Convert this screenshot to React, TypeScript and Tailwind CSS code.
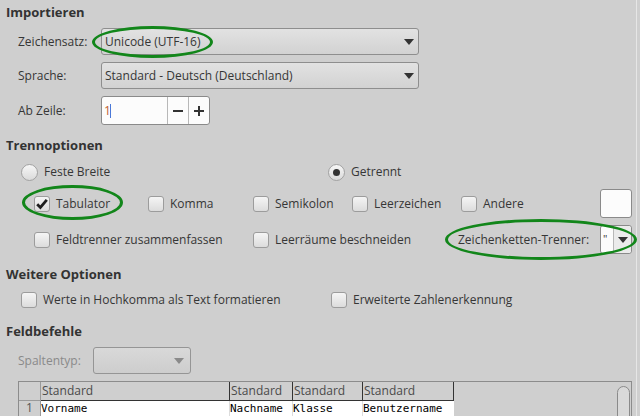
import React from "react";

const Arrow = ({ color = "#333" }: { color?: string }) => (
  <svg width="10" height="6" viewBox="0 0 10 6">
    <polygon points="0,0 10,0 5,6" fill={color} />
  </svg>
);

const Check = ({ checked = false }: { checked?: boolean }) => (
  <div className="w-[16px] h-[16px] shrink-0 rounded-[3px] border border-[#9c9c9c] bg-gradient-to-b from-[#f5f5f5] to-[#dcdcdc] flex items-center justify-center">
    {checked && (
      <svg width="14" height="14" viewBox="0 0 14 14">
        <path d="M2.2 7.2 L5.4 10.4 L11.8 2.8" stroke="#1e1e1e" strokeWidth="2.8" fill="none" />
      </svg>
    )}
  </div>
);

const Radio = ({ on = false }: { on?: boolean }) => (
  <div className="w-[17px] h-[17px] shrink-0 rounded-full border border-[#a2a2a2] bg-gradient-to-b from-[#f7f7f7] to-[#dadada] flex items-center justify-center">
    {on && <div className="w-[7px] h-[7px] rounded-full bg-[#333]" />}
  </div>
);

const Drop = ({ text, w }: { text: string; w: string }) => (
  <div className={`${w} h-full rounded-[3px] border border-[#8e8e8e] bg-gradient-to-b from-[#e2e2e2] to-[#d2d2d2] flex items-center pl-[3px] pr-[4px]`}>
    <span className="flex-1">{text}</span>
    <Arrow />
  </div>
);

const CheckItem = ({ label, w, checked }: { label: string; w: string; checked?: boolean }) => (
  <div className={`${w} flex items-center gap-[6px] shrink-0`}>
    <Check checked={checked} />
    <span className="whitespace-nowrap">{label}</span>
  </div>
);

export default function App() {
  return (
    <div
      className="relative w-[640px] h-[416px] overflow-hidden bg-[#cfcfcf] text-[12px] text-[#363636]"
      style={{ fontFamily: '"Open Sans", "Noto Sans", sans-serif' }}
    >
      <div className="w-[637px] h-full border-r border-[#e6e6e6] flex flex-col [&>*]:shrink-0">
        <div className="h-[26px] flex items-center pl-[6px] font-bold text-[13px] text-[#333]">Importieren</div>

        <div className="mt-[2px] h-[27px] flex items-center">
          <div className="w-[101px] pl-[18px]">Zeichensatz:</div>
          <Drop text="Unicode (UTF-16)" w="w-[318px]" />
        </div>

        <div className="mt-[7px] h-[27px] flex items-center">
          <div className="w-[101px] pl-[18px]">Sprache:</div>
          <Drop text="Standard - Deutsch (Deutschland)" w="w-[318px]" />
        </div>

        <div className="mt-[7px] h-[29px] flex items-center">
          <div className="w-[101px] pl-[18px]">Ab Zeile:</div>
          <div className="w-[109px] h-full rounded-[3px] border border-[#8a8a8a] bg-[#fcfcfc] flex">
            <div className="w-[66px] flex items-center pl-[2px] border-r border-[#b8b8b8]">
              <span className="text-[#c0602e]">1</span>
              <span className="w-px h-[14px] -ml-[1px] bg-[#4a78d8]" />
            </div>
            <div className="w-[21px] flex items-center justify-center border-r border-[#b8b8b8]">
              <div className="w-[10px] h-[2px] bg-[#333]" />
            </div>
            <div className="flex-1 flex items-center justify-center relative">
              <div className="w-[10px] h-[2px] bg-[#333]" />
              <div className="absolute w-[2px] h-[10px] bg-[#333]" />
            </div>
          </div>
        </div>

        <div className="mt-[11px] h-[20px] flex items-center pl-[6px] font-bold text-[13px] text-[#333]">Trennoptionen</div>

        <div className="mt-[6px] h-[20px] flex items-center">
          <div className="w-[328px] pl-[21px] flex items-center gap-[6px] shrink-0">
            <Radio />
            <span>Feste Breite</span>
          </div>
          <div className="flex items-center gap-[6px]">
            <Radio on />
            <span>Getrennt</span>
          </div>
        </div>

        <div className="mt-[7px] h-[29px] flex items-center pl-[34px]">
          <CheckItem label="Tabulator" w="w-[114px]" checked />
          <CheckItem label="Komma" w="w-[105px]" />
          <CheckItem label="Semikolon" w="w-[99px]" />
          <CheckItem label="Leerzeichen" w="w-[109px]" />
          <CheckItem label="Andere" w="w-[139px]" />
          <div className="w-[32px] h-full rounded-[3px] border border-[#8a8a8a] bg-[#fcfcfc]" />
        </div>

        <div className="mt-[7px] h-[29px] flex items-center pl-[34px]">
          <CheckItem label="Feldtrenner zusammenfassen" w="w-[219px]" />
          <CheckItem label="Leerräume beschneiden" w="w-[205px]" />
          <div className="w-[142px] shrink-0 whitespace-nowrap">Zeichenketten-Trenner:</div>
          <div className="w-[32px] h-full rounded-[3px] border border-[#8a8a8a] bg-[#fcfcfc] flex">
            <div className="w-[13px] border-r border-[#b8b8b8] flex items-center pl-[2px] text-[11px]">"</div>
            <div className="flex-1 flex items-center justify-center bg-[#ebebeb] rounded-r-[3px]">
              <Arrow />
            </div>
          </div>
        </div>

        <div className="mt-[11px] h-[20px] flex items-center pl-[6px] font-bold text-[13px] text-[#333]">Weitere Optionen</div>

        <div className="mt-[5px] h-[20px] flex items-center pl-[21px]">
          <CheckItem label="Werte in Hochkomma als Text formatieren" w="w-[310px]" />
          <CheckItem label="Erweiterte Zahlenerkennung" w="w-[250px]" />
        </div>

        <div className="mt-[12px] h-[20px] flex items-center pl-[6px] font-bold text-[13px] text-[#333]">Feldbefehle</div>

        <div className="mt-[5px] h-[27px] flex items-center">
          <div className="w-[93px] pl-[18px] text-[#8a8a8a]">Spaltentyp:</div>
          <div className="w-[98px] h-full rounded-[3px] border border-[#959595] bg-gradient-to-b from-[#d9d9d9] to-[#cdcdcd] flex items-center justify-end pr-[6px]">
            <Arrow color="#8a8a8a" />
          </div>
        </div>

        <div className="mt-[7px] ml-[18px] w-[614px] h-[60px] border border-[#8c8c8c] flex">
          <div className="flex flex-col">
            <div className="h-[19px] flex">
              <div className="w-[22px] border-r border-b border-[#9a9a9a]" />
              <div className="w-[189px] border-r border-b border-[#333] pl-[1px] leading-[18px] text-[#4a4a4a]">Standard</div>
              <div className="w-[63px] border-r border-b border-[#333] pl-[1px] leading-[18px] text-[#4a4a4a]">Standard</div>
              <div className="w-[70px] border-r border-b border-[#333] pl-[1px] leading-[18px] text-[#4a4a4a]">Standard</div>
              <div className="w-[91px] border-r border-b border-[#333] pl-[1px] leading-[18px] text-[#4a4a4a]">Standard</div>
            </div>
            <div
              className="h-[16px] flex text-[11px] text-black"
              style={{ fontFamily: '"DejaVu Sans Mono", monospace' }}
            >
              <div className="w-[22px] border-r border-b border-[#9a9a9a] flex justify-center text-[#555] text-[12px] leading-[14px]" style={{ fontFamily: '"Open Sans", sans-serif' }}>1</div>
              <div className="w-[189px] bg-white border-r border-[#dcdcdc] leading-[15px]">Vorname</div>
              <div className="w-[63px] bg-white border-r border-[#dcdcdc] leading-[15px]">Nachname</div>
              <div className="w-[70px] bg-white border-r border-[#dcdcdc] leading-[15px]">Klasse</div>
              <div className="w-[91px] bg-white leading-[15px]">Benutzername</div>
            </div>
          </div>
          <div className="ml-auto mr-[1px] mt-[4px] w-[13px] h-[50px] rounded-t-[7px] border border-[#8a8a8a] bg-[#d9d9d9]" />
        </div>
      </div>

      <div className="absolute left-[92px] top-[26px] w-[121px] h-[32px] rounded-[50%] border-[3px] border-[#12861a]" />
      <div className="absolute left-[22px] top-[185px] w-[101px] h-[35px] rounded-[50%] border-[3px] border-[#12861a]" />
      <div className="absolute left-[445px] top-[219px] w-[192px] h-[41px] rounded-[50%] border-[3px] border-[#12861a]" />
    </div>
  );
}
